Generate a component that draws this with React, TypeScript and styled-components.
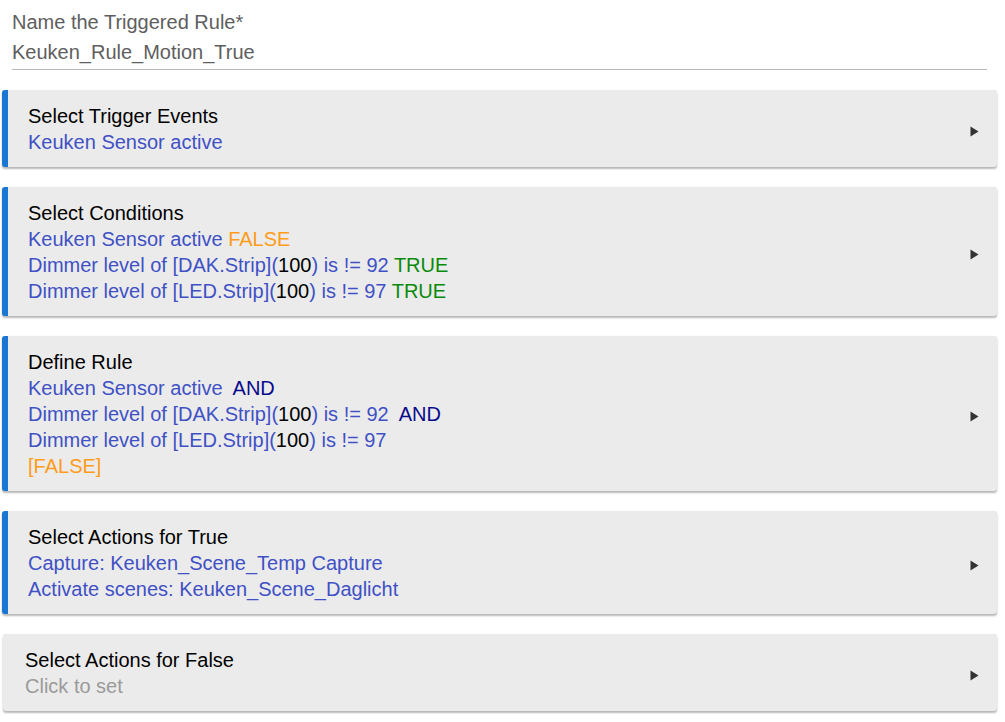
import React from "react";
import styled, { createGlobalStyle } from "styled-components";

const Global = createGlobalStyle`
  html, body { margin: 0; padding: 0; background: #ffffff; }
  body { font-family: "Liberation Sans", Arial, sans-serif; }
`;

const Page = styled.div`
  display: flex;
  flex-direction: column;
  gap: 20px;
  padding: 9px 8px 10px 2px;
  width: 1005px;
  box-sizing: border-box;
`;

const Field = styled.div`
  display: flex;
  flex-direction: column;
  margin: 0 10px 0 10px;
  padding: 0 0 4px 0;
  border-bottom: 1px solid #b8b8b8;
  font-size: 20px;
  line-height: 26px;
  color: #5e5e5e;
`;

const FieldLabel = styled.div`
  padding-bottom: 4px;
`;

const FieldValue = styled.div``;

const Card = styled.div<{ $active?: boolean }>`
  display: flex;
  align-items: center;
  margin-left: ${(p) => (p.$active ? "0" : "1px")};
  background: #ebebeb;
  border-radius: 3px;
  border-left: ${(p) => (p.$active ? "6px solid #1976d2" : "0")};
  padding: 13px 18px 12px ${(p) => (p.$active ? "20px" : "22px")};
  box-shadow: 0 2px 2px rgba(0, 0, 0, 0.28), 0 0 1px rgba(0, 0, 0, 0.12);
  cursor: pointer;
`;

const CardBody = styled.div`
  flex: 1;
  display: flex;
  flex-direction: column;
  font-size: 20px;
  line-height: 26px;
`;

const Title = styled.div`
  color: #000;
`;

const Line = styled.div`
  color: #3f51c5;
  white-space: pre;
`;

const Tone = styled.span<{ $tone: "black" | "orange" | "green" | "navy" | "gray" }>`
  color: ${(p) =>
    ({
      black: "#000000",
      orange: "#ff9c1a",
      green: "#0a8a0a",
      navy: "#0a0a8c",
      gray: "#9a9a9a",
    })[p.$tone]};
`;

const Arrow = styled.svg`
  width: 9px;
  height: 11px;
  margin-top: 5px;
  flex-shrink: 0;
`;

const Chevron = () => (
  <Arrow viewBox="0 0 9 11">
    <path d="M0.5 0.5 L8.5 5.5 L0.5 10.5 Z" fill="#333" />
  </Arrow>
);

const Dim = ({ dev, val, tail }: { dev: string; val: string; tail?: React.ReactNode }) => (
  <Line>
    Dimmer level of [{dev}](<Tone $tone="black">100</Tone>) is != {val}
    {tail}
  </Line>
);

export default function App() {
  return (
    <>
      <Global />
      <Page>
        <Field>
          <FieldLabel>Name the Triggered Rule*</FieldLabel>
          <FieldValue>Keuken_Rule_Motion_True</FieldValue>
        </Field>

        <Card $active>
          <CardBody>
            <Title>Select Trigger Events</Title>
            <Line>Keuken Sensor active</Line>
          </CardBody>
          <Chevron />
        </Card>

        <Card $active>
          <CardBody>
            <Title>Select Conditions</Title>
            <Line>
              Keuken Sensor active <Tone $tone="orange">FALSE</Tone>
            </Line>
            <Dim dev="DAK.Strip" val="92" tail={<> <Tone $tone="green">TRUE</Tone></>} />
            <Dim dev="LED.Strip" val="97" tail={<> <Tone $tone="green">TRUE</Tone></>} />
          </CardBody>
          <Chevron />
        </Card>

        <Card $active>
          <CardBody>
            <Title>Define Rule</Title>
            <Line>
              Keuken Sensor active{"  "}<Tone $tone="navy">AND</Tone>
            </Line>
            <Dim dev="DAK.Strip" val="92" tail={<>{"  "}<Tone $tone="navy">AND</Tone></>} />
            <Dim dev="LED.Strip" val="97" />
            <Line>
              <Tone $tone="orange">[FALSE]</Tone>
            </Line>
          </CardBody>
          <Chevron />
        </Card>

        <Card $active>
          <CardBody>
            <Title>Select Actions for True</Title>
            <Line>Capture: Keuken_Scene_Temp Capture</Line>
            <Line>Activate scenes: Keuken_Scene_Daglicht</Line>
          </CardBody>
          <Chevron />
        </Card>

        <Card>
          <CardBody>
            <Title>Select Actions for False</Title>
            <Line>
              <Tone $tone="gray">Click to set</Tone>
            </Line>
          </CardBody>
          <Chevron />
        </Card>
      </Page>
    </>
  );
}
